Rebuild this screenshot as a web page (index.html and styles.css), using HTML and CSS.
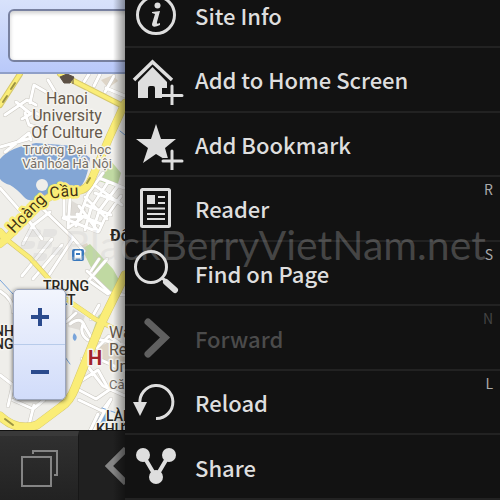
FILE: index.html
```html
<!DOCTYPE html>
<html lang="en">
<head>
<meta charset="utf-8">
<title>Browser menu</title>
<link rel="stylesheet" href="styles.css">
</head>
<body>
<main class="page">
  <header class="search"><input class="search-box" type="text" aria-label="Search"></header>
  <section class="map">
    <svg class="map-art" viewBox="0 73 125 357" preserveAspectRatio="xMinYMin slice" role="img" aria-label="Street map of Hanoi">
      <rect y="73" width="125" height="357" fill="#efeeea"/>
      <path d="M101 79l12-5 5 6-10 7zM80 245l7-3 4 8-7 4zM93 349l16-8 16 10v18l-23-7z" fill="#ded5c7"/>
      <path d="M0 158Q10 146 36 142L75 145L90 157Q87 181 79 187L58 191L39 199Q28 201 24 196Q17 188 10 184Q3 182 0 178Z" fill="#83a6d5"/>
      <circle cx="42" cy="184" r="6" fill="#efeeea"/>
      <path d="M104 169l7-9 10 12-4 14-18-6zM82 248l8-5 23 25 10 18-9 8-15-11zM86 350l12-35 6-5-9 39z" fill="#c0d9a2"/>
      <path d="M72 200l14 8-5 14-17-5zM73 308l12 7-5 14-12-3z" fill="#dedbd6"/>
      <path d="M74 332q5 4 1 8-4-2-1-8zM96 421l7-12 7 4-4 14z" fill="#78a4da"/>
      <g fill="none" stroke-linecap="round" stroke-linejoin="round">
        <g stroke="#cbc8c1" stroke-width="4">
          <path id="streets" d="M5 114l22-15 9 5M30 102l4-18 12 7M16 101l15 12M22 118l12-7 13 7M48 79l9 15M0 146l28-8M5 151l24-19 2 7M84 81l5-8M94 85l6-12M105 91l9-16M106 87l19 8M25 112l4 12 15 4M0 187l29 33 13 18M43 208l29 28 12 14M50 211l-18 14M32 226l-9 17M64 199v17h16M70 198l-2 29 14-10M79 205l18 24M85 196l22 22M93 183l29 21M99 177l25 10M103 172l-15 21-12 32M108 181l-17 26-6 22M117 186l-18 24-5 16M121 195l-17 24-5 11M77 213l24 10M86 204l25 10M95 192l24 9M63 217l35 14M52 238l-30 37M72 239l-25 38M62 244l-29 34M91 270l8-12M89 279l18-21M87 270l23 22 14 2M91 281l17 12M67 299l-9 14M76 312l-10 9M70 323q11-9 15 3l7 12M83 323q-4 10 5 16M91 318l8-14M82 358l21 27 22 10M88 353l37 17M76 383l22-14 11 20-13 9-17-9M92 337l33 7M97 347l12-12 10 7M0 290q14 9 13 21M13 399l20 9 11-9 8-16M34 404l-5 20M0 374l13 10-5 21M111 398l-17 32M79 399l23 11 9-12M90 430l8-17"/>
        </g>
        <use href="#streets" stroke="#fff" stroke-width="3"/>
        <path d="M0 279l13 14M65 356l5 7M102 407l23 8M120 130l5 4" stroke="#78a4da"/>
        <g stroke="#d5c76b">
          <path d="M20 73L0 104M60 73l65 33" stroke-width="6"/>
          <path d="M125 102l-15 33-18 42q-5 13-16 13-19 0-31 9L6 238l-6 5M0 231l6 7" stroke-width="8"/>
          <path d="M6 238l24 19 18 20 14 18 14 10 19 13 30 15" stroke-width="5"/>
          <path d="M125 274l-25 51-25 62q-5 13-14 19l-24 18q-20 7-37-9" stroke-width="9"/>
        </g>
        <g stroke="#faed77">
          <path d="M20 73L0 104M60 73l65 33" stroke-width="4"/>
          <path d="M125 102l-15 33-18 42q-5 13-16 13-19 0-31 9L6 238l-6 5M0 231l6 7" stroke-width="7"/>
          <path d="M6 238l24 19 18 20 14 18 14 10 19 13 30 15" stroke-width="4"/>
          <path d="M125 274l-25 51-25 62q-5 13-14 19l-24 18q-20 7-37-9" stroke-width="8"/>
        </g>
        <path d="M15 82l-4 6M7 95l-4 6M90 177l-3 5M5 418l8 6" stroke="#9b9342" stroke-width="2"/>
      </g>
      <path d="M60 76l7-3 7 3-4 6h-6zM73 76v7" fill="#5c5044" stroke="#5c5044"/>
      <g class="place">
        <text x="67" y="103" class="large">Hanoi</text>
        <text x="67" y="120" class="large">University</text>
        <text x="67" y="137" class="large">Of Culture</text>
        <text x="67" y="153" class="small">Trường Đại học</text>
        <text x="67" y="167" class="small">Văn hóa Hà Nội</text>
      </g>
      <path id="road-name" d="M14 233L44 202Q50 196 76 195" fill="none"/>
      <text class="road"><textPath href="#road-name">Hoàng Cầu</textPath></text>
      <g class="district">
        <text x="110" y="240" class="bold">Đố</text>
        <text x="43" y="290">TRUNG</text>
        <text x="46" y="304">VIỆT</text>
        <text x="-6" y="335">NH</text>
        <text x="-6" y="348">NG</text>
        <text x="106" y="420">LÀN</text>
        <text x="96" y="433">KHƯ</text>
      </g>
      <g class="place start">
        <text x="109" y="337">Wa</text>
        <text x="109" y="354">Re</text>
        <text x="109" y="371">Un</text>
        <text x="109" y="388" class="small">Că</text>
      </g>
      <text x="88" y="364" class="hospital">H</text>
      <rect x="72" y="248" width="12" height="12" rx="2" fill="#3978bd"/>
      <path d="M75 250h6v7h-6zM75 257v2M81 257v2" fill="#fff" stroke="#fff"/>
      <path d="M76 252h4v2h-4z" fill="#3978bd"/>
    </svg>
    <div class="zoom">
      <button type="button" aria-label="Zoom in"><svg viewBox="0 0 20 20"><path d="M10 1v18M1 10h18"/></svg></button>
      <button type="button" aria-label="Zoom out"><svg viewBox="0 0 20 20"><path d="M1 10h18"/></svg></button>
    </div>
  </section>
  <nav class="toolbar">
    <button type="button" class="tabs" aria-label="Tabs"><svg viewBox="0 0 38 38"><path d="M2 8h29v29H2zM13 5V2h24v24h-3"/></svg></button>
    <button type="button" class="back" aria-label="Back"><svg viewBox="0 0 38 38"><path d="M23 2L6 19l17 17"/></svg></button>
  </nav>
</main>
<nav class="menu">
  <button type="button" class="item"><svg class="icon" viewBox="0 0 52 52"><circle cx="24" cy="26" r="18.500" fill="none" stroke="currentColor" stroke-width="3"/><circle cx="25.500" cy="16.500" r="3"/><path d="M20 23l8-1-3 11q-1 3 3 1v2q-8 4-8-1l3-10-3-1z"/></svg>Site Info</button>
  <button type="button" class="item"><svg class="icon" viewBox="0 0 52 52"><path d="M2 27L20.500 9 40 27" fill="none" stroke="currentColor" stroke-width="3.500"/><path d="M6 29l14.500-15L35 29v6h-5v10h-7V35q0-2-2-2h-3q-2 0-2 2v10H6z"/><path d="M40 33v19M30 43h20" stroke="#111" stroke-width="6"/><path d="M40 33v19M30 42.500h20" stroke="currentColor" stroke-width="3" stroke-linecap="round"/></svg>Add to Home Screen</button>
  <button type="button" class="item"><svg class="icon" viewBox="0 0 52 52"><path d="M24 6l5 15h15L33 30l4 14-13-8-13 9 5-15L4 21h15z"/><path d="M40 34v18M31 43h19" stroke="#111" stroke-width="6"/><path d="M40 33v19M31 43h19" stroke="currentColor" stroke-width="3" stroke-linecap="round"/></svg>Add Bookmark</button>
  <button type="button" class="item"><svg class="icon" viewBox="0 0 52 52"><rect x="9.500" y="7.500" width="28" height="37" rx="1" fill="none" stroke="currentColor" stroke-width="3"/><path d="M15 13h8v9h-8z"/><path d="M26 15h7M26 21h7M15 26.500h18M15 32h18M15 37h18" stroke="currentColor" stroke-width="2"/></svg>Reader<kbd>R</kbd></button>
  <button type="button" class="item"><svg class="icon" viewBox="0 0 52 52"><circle cx="19" cy="20" r="15.500" fill="none" stroke="currentColor" stroke-width="3"/><path d="M30 31l4 3" stroke="currentColor" stroke-width="3"/><path d="M34 35l9 8" stroke="currentColor" stroke-width="6" stroke-linecap="round"/></svg>Find on Page<kbd>S</kbd></button>
  <button type="button" class="item" disabled><svg class="icon" viewBox="0 0 52 52"><path d="M16 10l17 15.500L16 42" fill="none" stroke="currentColor" stroke-width="7" stroke-linecap="round"/></svg>Forward<kbd>N</kbd></button>
  <button type="button" class="item"><svg class="icon" viewBox="0 0 52 52"><path d="M8 28A16.500 16.500 0 1 1 24 42.500" fill="none" stroke="currentColor" stroke-width="3"/><path d="M1 26h14L8 40z"/></svg>Reload<kbd>L</kbd></button>
  <button type="button" class="item"><svg class="icon" viewBox="0 0 52 52"><path d="M11 14l13 22 13-22" fill="none" stroke="currentColor" stroke-width="4"/><circle cx="11" cy="14" r="7"/><circle cx="37" cy="14" r="7"/><circle cx="24" cy="36" r="7"/></svg>Share</button>
</nav>
<div class="watermark"><svg viewBox="0 0 48 36"><path d="M12 2h9q5 0 4 4t-6 4h-9zM28 2h9q5 0 4 4t-6 4h-9zM6 14h9q5 0 4 4t-6 4H4zM23 14h9q5 0 4 4t-6 4h-9zM18 26h9q5 0 4 4t-6 4h-9zM37 20h7q4 0 3 4t-5 4h-7z"/></svg><span>BlackBerryVietNam.net</span></div>
</body>
</html>
```
FILE: styles.css
```css
* { box-sizing: border-box; }

body {
  margin: 0;
  height: 100vh;
  display: grid;
  grid-template-columns: 25% 1fr;
  overflow: hidden;
  position: relative;
  background: #111;
  font-family: "Noto Sans CJK SC", "Open Sans", sans-serif;
}

button {
  margin: 0;
  padding: 0;
  border: 0;
  background: none;
  color: inherit;
  font: inherit;
}

svg { display: block; }

.page {
  display: flex;
  flex-direction: column;
  min-width: 0;
  height: 100vh;
  overflow: hidden;
  position: relative;
}

.page::after {
  content: "";
  position: absolute;
  inset: 0 0 0 auto;
  width: 12px;
  background: linear-gradient(to right, transparent, rgba(0, 0, 0, .4));
  pointer-events: none;
}

.search {
  flex: none;
  height: 74px;
  padding: 9px 0 11px 8px;
  background: linear-gradient(#d8e2fb, #b9c9fa);
  border-bottom: 2px solid #8f9fc8;
}

.search-box {
  width: 150%;
  height: 53px;
  border: 2px solid #7881a0;
  border-radius: 6px;
  background: #fff;
  box-shadow: inset 0 2px 4px #ccc;
}

.map {
  flex: 1;
  min-height: 0;
  position: relative;
  overflow: hidden;
}

.map-art { width: 100%; height: 100%; }

.map-art text {
  font-family: Roboto, sans-serif;
  paint-order: stroke;
  stroke: #f5f4f0;
  stroke-width: 3px;
  stroke-linejoin: round;
}

.place { fill: #65594b; text-anchor: middle; }
.place.start { text-anchor: start; }
.place text { font-size: 16px; }
.place .small { font-size: 13px; fill: #777068; }
.district { fill: #292722; font-size: 14px; font-weight: 500; }
.district .bold { font-size: 16px; font-weight: 700; }
.map-art .road { fill: #3f3014; font-size: 16px; stroke: #faed77; stroke-width: 5px; }
.map-art .hospital { fill: #a2232b; font-size: 20px; font-weight: 700; }

.zoom {
  position: absolute;
  left: 13px;
  bottom: 30px;
  width: 53px;
  height: 111px;
  display: flex;
  flex-direction: column;
  border: 1px solid #9ba5bd;
  border-radius: 5px;
  background: linear-gradient(#f2f5fd, #d1dcfa);
  box-shadow: 0 1px 4px rgba(0, 0, 0, .65);
}

.zoom button { flex: 1; display: grid; place-items: center; }
.zoom button + button { border-top: 1px solid #b7cbea; }
.zoom svg { width: 20px; height: 20px; stroke: #2b4b8d; stroke-width: 4; }

.toolbar {
  flex: none;
  height: 70px;
  display: flex;
  background: #202020;
  border-top: 1px solid #111;
}

.toolbar button { display: flex; align-items: center; flex: none; }
.toolbar svg { width: 38px; height: 38px; fill: none; stroke: #858585; stroke-width: 2; }

.toolbar .tabs {
  width: 79px;
  padding-left: 20px;
  background: linear-gradient(#303030, #222);
  border-top: 5px solid #393939;
  border-right: 1px solid #171717;
}

.toolbar .back { padding-left: 24px; }
.toolbar .back svg { stroke-width: 6; }

.menu {
  display: grid;
  grid-template-rows: 65px repeat(7, 1fr);
  min-width: 0;
  margin-top: -17px;
  background: #121212;
  color: #dedede;
}

.item {
  display: flex;
  align-items: center;
  gap: 11px;
  padding-left: 7px;
  position: relative;
  border-bottom: 2px solid #222;
  font-size: 22px;
  font-weight: 500;
  line-height: 32px;
  text-align: left;
  white-space: nowrap;
}

.item:disabled { color: #4b4b4b; }
.item:disabled .icon { color: #606060; }

.icon { width: 52px; height: 52px; flex: none; fill: currentColor; }

.item kbd {
  position: absolute;
  top: 4px;
  right: 7px;
  font-family: inherit;
  font-size: 14px;
  font-weight: 400;
  line-height: 16px;
  color: #aaa;
}

.item:disabled kbd { color: #444; }

.watermark {
  position: absolute;
  left: 16px;
  top: 221px;
  display: flex;
  align-items: center;
  gap: 0;
  color: rgba(200, 200, 200, .28);
  font-family: Lato, sans-serif;
  font-size: 41px;
  line-height: 48px;
  white-space: nowrap;
  pointer-events: none;
}

.watermark svg { width: 48px; height: 36px; fill: currentColor; }
```
